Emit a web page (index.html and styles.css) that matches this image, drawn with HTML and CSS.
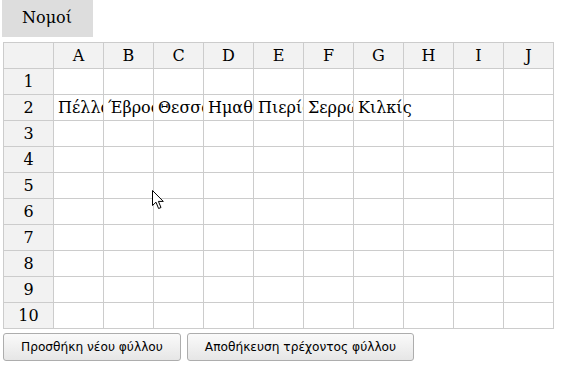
FILE: index.html
```html
<!DOCTYPE html>
<html lang="el">
<head>
  <meta charset="UTF-8">
  <title>Νομοί</title>
  <link rel="stylesheet" href="styles.css">
</head>
<body>
  <div class="tabs">
    <span class="tab">Νομοί</span>
  </div>

  <table class="sheet">
    <thead>
      <tr>
        <th></th><th>A</th><th>B</th><th>C</th><th>D</th><th>E</th><th>F</th><th>G</th><th>H</th><th>I</th><th>J</th>
      </tr>
    </thead>
    <tbody id="sheetBody"></tbody>
  </table>

  <div class="actions">
    <button>Προσθήκη νέου φύλλου</button>
    <button>Αποθήκευση τρέχοντος φύλλου</button>
  </div>

  <svg class="pointer" width="13" height="20" viewBox="0 0 13 20">
    <path d="M0.5 0.5 L0.5 15.5 L4 12.2 L6.6 18.5 L9 17.5 L6.4 11.4 L11.3 11.4 Z" fill="#fff" stroke="#000" stroke-width="1" stroke-linejoin="round"/>
  </svg>

  <script>
    const cols = "ABCDEFGHIJ".split("");
    const data = {
      2: ["Πέλλα", "Έβρος", "Θεσσαλονίκη", "Ημαθία", "Πιερία", "Σερρών", "Κιλκίς"]
    };

    const body = document.getElementById("sheetBody");
    for (let r = 1; r <= 10; r++) {
      const tr = document.createElement("tr");
      const th = document.createElement("th");
      th.textContent = r;
      tr.appendChild(th);

      const row = data[r] || [];
      cols.forEach((c, i) => {
        const td = document.createElement("td");
        const div = document.createElement("div");
        div.className = "cell";
        div.textContent = row[i] || "";
        // text spills over when the next cell is empty
        if (row[i] && !row[i + 1]) div.classList.add("spill");
        td.appendChild(div);
        tr.appendChild(td);
      });
      body.appendChild(tr);
    }
  </script>
</body>
</html>
```

FILE: styles.css
```css
* {
  box-sizing: border-box;
}

body {
  margin: 0;
  padding: 0 3px;
  background: #fff;
  color: #000;
  font-family: "DejaVu Serif", serif;
  font-size: 16px;
}

.tabs {
  height: 37px;
  margin-left: -1px;
}

.tab {
  display: inline-block;
  height: 37px;
  line-height: 36px;
  padding: 0 21px 0 20px;
  background: #ddd;
}

.sheet {
  margin-top: 5px;
  border-collapse: collapse;
  table-layout: fixed;
  width: 551px;
}

.sheet th,
.sheet td {
  width: 50px;
  height: 26px;
  padding: 0;
  border: 1px solid #ccc;
  font-weight: normal;
  text-align: center;
}

.sheet th {
  background: #f2f2f2;
}

.sheet td {
  text-align: left;
}

.cell {
  padding-left: 4px;
  white-space: nowrap;
  overflow: hidden;
  line-height: 24px;
}

.cell.spill {
  overflow: visible;
}

.actions {
  display: flex;
  gap: 6px;
  margin-top: 4px;
}

button {
  height: 28px;
  padding: 0 17px;
  font-family: "DejaVu Sans", sans-serif;
  font-size: 12.2px;
  color: #000;
  background: linear-gradient(#fafafa, #e6e6e6);
  border: 1px solid #adadad;
  border-radius: 3px;
}

.pointer {
  position: absolute;
  left: 152px;
  top: 190px;
}
```
